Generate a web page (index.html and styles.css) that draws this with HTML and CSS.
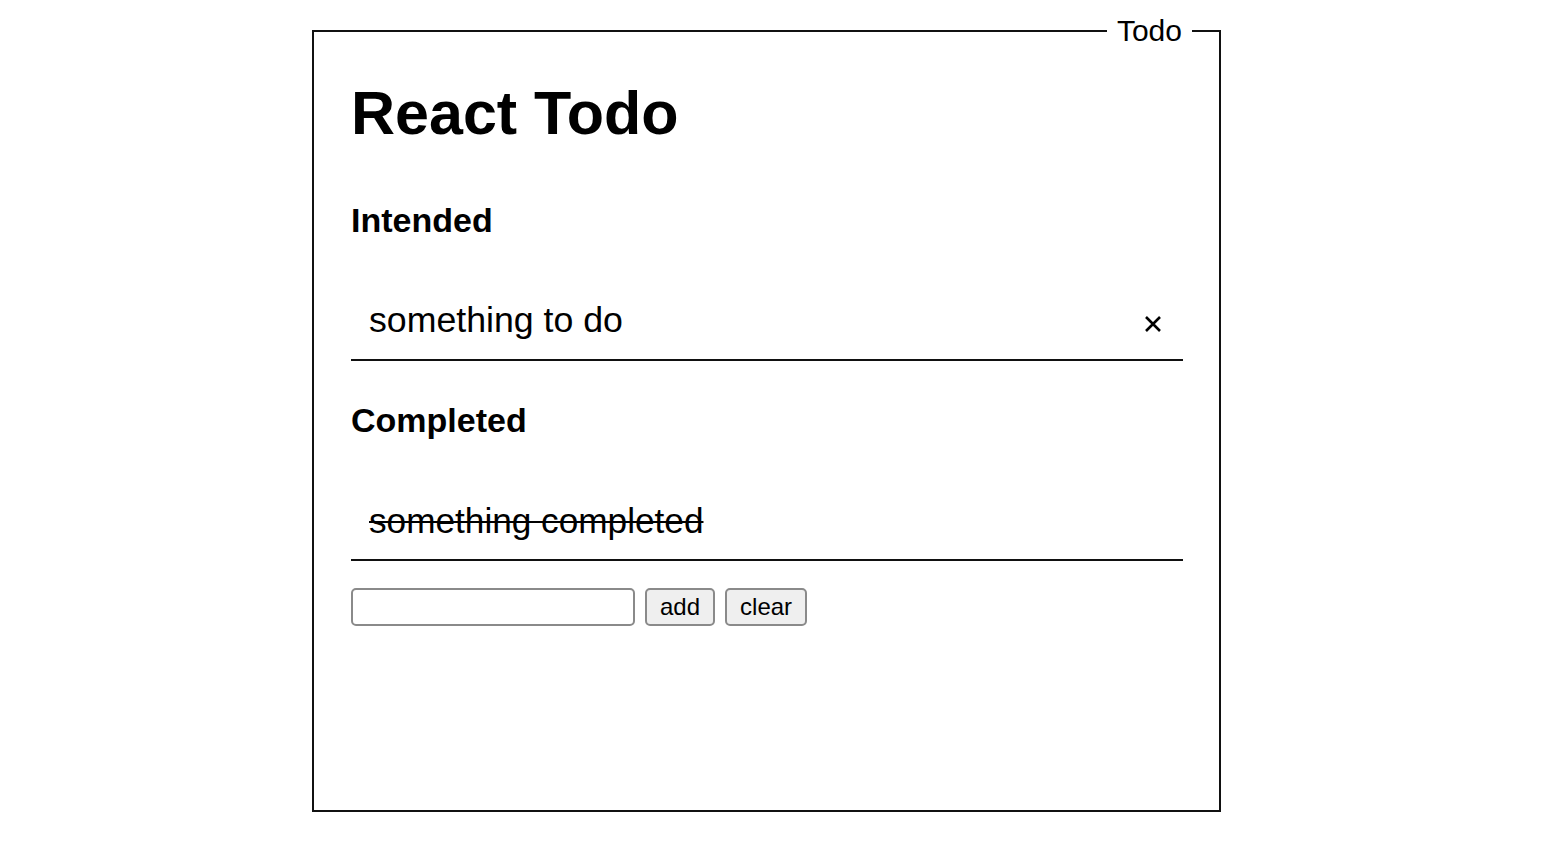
FILE: index.html
```html
<!DOCTYPE html>
<html>
<head>
<meta charset="utf-8">
<link rel="stylesheet" href="styles.css">
</head>
<body>
<fieldset class="todo-box">
  <legend class="todo-legend">Todo</legend>
  <h1 class="title">React Todo</h1>
  <h2 class="section-title first">Intended</h2>
  <ul class="todo-list">
    <li class="todo-item">
      <span class="todo-text">something to do</span>
      <svg class="remove-icon" width="22" height="22" viewBox="0 0 22 22"><path d="M4 4 L18 18 M18 4 L4 18" stroke="#000" stroke-width="2.6" stroke-linecap="butt" fill="none"/></svg>
    </li>
  </ul>
  <h2 class="section-title">Completed</h2>
  <ul class="todo-list">
    <li class="todo-item">
      <span class="todo-text done">something completed</span>
    </li>
  </ul>
  <div class="add-row">
    <input class="add-input" type="text">
    <button class="btn">add</button>
    <button class="btn">clear</button>
  </div>
</fieldset>
</body>
</html>
```

FILE: styles.css
```css
html, body {
  margin: 0;
  padding: 0;
  background: #fff;
}
body {
  font-family: "Liberation Sans", Arial, sans-serif;
  color: #000;
  padding-top: 16px;
}
.todo-box {
  box-sizing: border-box;
  width: 909px;
  height: 796px;
  margin: 0 0 0 312px;
  border: 2px solid #111;
  padding: 0 36px 0 37px;
  min-width: 0;
}
.todo-legend {
  margin-left: auto;
  margin-right: -9px;
  padding: 0 10px;
  font-size: 30px;
  line-height: 30px;
}
.title {
  margin: 37px 0 0;
  font-size: 61px;
  line-height: 61px;
  font-weight: bold;
}
.section-title {
  margin: 42px 0 46px;
  font-size: 34px;
  line-height: 34px;
  font-weight: bold;
}
.section-title.first {
  margin-top: 59px;
}
.todo-list {
  list-style: none;
  margin: 0;
  padding: 0;
}
.todo-item {
  display: flex;
  align-items: center;
  justify-content: space-between;
  padding: 20px 19px 21px 18px;
  border-bottom: 2px solid #111;
}
.todo-text {
  font-size: 35.7px;
  line-height: 35px;
}
.todo-text.done {
  font-size: 35.2px;
  text-decoration: line-through;
  text-decoration-thickness: 2px;
}
.remove-icon {
  display: block;
  margin-top: 7px;
  flex: none;
}
.add-row {
  display: flex;
  gap: 10px;
  margin-top: 27px;
}
.add-input {
  box-sizing: border-box;
  width: 284px;
  height: 38px;
  margin: 0;
  border: 2px solid #8a8a8a;
  border-radius: 5px;
  background: #fff;
  font-size: 24px;
  font-family: "Liberation Sans", Arial, sans-serif;
}
.btn {
  box-sizing: border-box;
  height: 38px;
  margin: 0;
  padding: 0 13px;
  border: 2px solid #8a8a8a;
  border-radius: 5px;
  background: #efefef;
  font-size: 24px;
  font-family: "Liberation Sans", Arial, sans-serif;
  color: #000;
}
```
